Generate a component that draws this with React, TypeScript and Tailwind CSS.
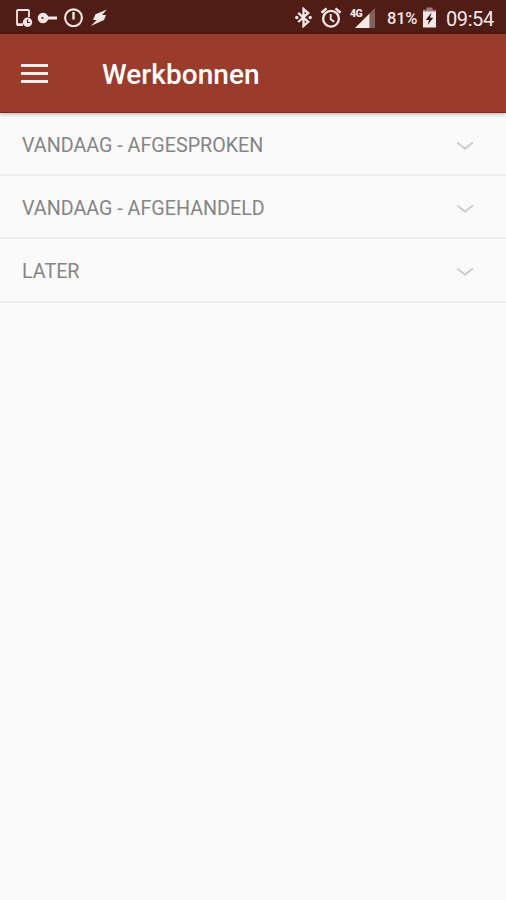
import { useState } from 'react'

interface Section {
  id: string
  title: string
}

const SECTIONS: Section[] = [
  { id: 'today-planned', title: 'VANDAAG - AFGESPROKEN' },
  { id: 'today-done', title: 'VANDAAG - AFGEHANDELD' },
  { id: 'later', title: 'LATER' },
]

export default function App() {
  return (
    <div className="flex h-screen w-full flex-col bg-[#fafafa] font-['Roboto',sans-serif]">
      <StatusBar />
      <AppBar title="Werkbonnen" />
      <main className="flex-1">
        {SECTIONS.map((s) => (
          <SectionRow key={s.id} section={s} />
        ))}
      </main>
    </div>
  )
}

function StatusBar() {
  return (
    <div className="flex h-[34px] shrink-0 items-center justify-between bg-[#4f1d15] pl-[15px] pr-[11px] text-[#f3e8e6]">
      <div className="flex items-center">
        <DeviceIcon />
        <KeyIcon />
        <TimerIcon />
        <BoltIcon />
      </div>
      <div className="flex items-center">
        <BluetoothIcon />
        <AlarmIcon />
        <SignalIcon />
        <span className="ml-[11px] w-[35px] whitespace-nowrap pt-[4px] text-[16.5px] font-medium leading-5 tracking-[-0.2px]">
          81%
        </span>
        <BatteryIcon />
        <span className="ml-[9px] w-[49px] whitespace-nowrap pt-[4px] text-[20px] leading-5 tracking-[-0.4px]">09:54</span>
      </div>
    </div>
  )
}

function AppBar({ title }: { title: string }) {
  return (
    <header className="z-10 flex h-[79px] shrink-0 items-center border-b border-[#8c2318] bg-[#9b3b2b] pl-[21px] shadow-[0_1px_4px_rgba(0,0,0,0.3)]">
      <button aria-label="Menu" className="flex w-[27px] flex-col gap-[5px]">
        <span className="h-[3px] bg-[#fbefec]" />
        <span className="h-[3px] bg-[#fbefec]" />
        <span className="h-[3px] bg-[#fbefec]" />
      </button>
      <h1 className="ml-[54px] pt-[4px] text-[28px] font-medium leading-8 tracking-[0.05px] text-white">{title}</h1>
    </header>
  )
}

function SectionRow({ section }: { section: Section }) {
  const [open, setOpen] = useState(false)

  return (
    <button
      onClick={() => setOpen(!open)}
      aria-expanded={open}
      className="flex h-[63.2px] w-full items-center justify-between border-b-2 border-[#eeeeee] pl-[22px] pr-[32px] pt-[5px] text-left"
    >
      <span className="text-[19.7px] leading-6 text-[#858585]">{section.title}</span>
      <svg width="18" height="10" viewBox="0 0 18 10" fill="none" className={open ? 'rotate-180' : ''}>
        <path d="M1.2 1.5 9 7.5l7.8-6" stroke="#cfcfcf" strokeWidth="2.2" />
      </svg>
    </button>
  )
}

function DeviceIcon() {
  return (
    <svg width="19" height="20" viewBox="0 0 19 20" fill="none">
      <path d="M7.5 18H3a1 1 0 0 1-1-1V4a1 1 0 0 1 1-1h10a1 1 0 0 1 1 1v6" stroke="currentColor" strokeWidth="1.8" />
      <path d="M2 16.3h6v2.5H2z" fill="currentColor" />
      <circle cx="12.5" cy="15.2" r="4.7" fill="currentColor" />
      <path d="M12.5 12.5v3h2.5" stroke="#4f1d15" strokeWidth="1.2" />
    </svg>
  )
}

function KeyIcon() {
  return (
    <svg width="21" height="20" viewBox="0 0 21 20" fill="none" className="ml-[3px]">
      <path d="M9 11h11" stroke="currentColor" strokeWidth="3" />
      <circle cx="6" cy="11" r="5.3" fill="currentColor" />
      <circle cx="5.5" cy="11" r="1.1" fill="#4f1d15" />
    </svg>
  )
}

function TimerIcon() {
  return (
    <svg width="20" height="20" viewBox="0 0 20 20" fill="none" className="ml-[5px]">
      <circle cx="10.5" cy="10.8" r="8.4" stroke="currentColor" strokeWidth="2.1" />
      <path d="M10.5 5v7.5" stroke="currentColor" strokeWidth="2.4" />
    </svg>
  )
}

function BoltIcon() {
  return (
    <svg width="19" height="20" viewBox="0 0 19 20" className="ml-[6px]">
      <path d="M18 2.5 6.5 7.2 4 13h3.8L1.8 19l13.2-6 2-5h-4Z" fill="currentColor" />
    </svg>
  )
}

function BluetoothIcon() {
  return (
    <svg width="19" height="22" viewBox="0 0 19 22" fill="none">
      <path d="m4.2 6.8 10 9-4.7 4.2V3l4.7 4-10 9" stroke="currentColor" strokeWidth="2.3" />
      <circle cx="2.8" cy="11.5" r="1.7" fill="currentColor" />
      <circle cx="16.2" cy="11.5" r="1.7" fill="currentColor" />
    </svg>
  )
}

function AlarmIcon() {
  return (
    <svg width="22" height="22" viewBox="0 0 22 22" fill="none" className="ml-[7px]">
      <circle cx="11" cy="12.7" r="7.9" stroke="currentColor" strokeWidth="2.3" />
      <path d="M1.5 6.7 6.5 2.4M20.5 6.7l-5-4.3" stroke="currentColor" strokeWidth="2.5" />
      <path d="M10.7 8v5.3l3.5 2.5" stroke="currentColor" strokeWidth="1.8" />
    </svg>
  )
}

function SignalIcon() {
  return (
    <div className="relative ml-[8px] h-[22px] w-[26px]">
      <svg width="26" height="22" viewBox="0 0 26 22">
        <path d="M19.5 7.5 25 2v20h-5.5Z" fill="#85615b" />
        <path d="M5 22 19.5 7.5V22Z" fill="currentColor" />
      </svg>
      <span className="absolute left-0 top-[2px] text-[10.5px] font-black leading-[12px] tracking-[-0.5px]">4G</span>
    </div>
  )
}

function BatteryIcon() {
  return (
    <svg width="15" height="22" viewBox="0 0 15 22">
      <path d="M4.5 1.5h6v2.3H14V6H1V3.8h3.5Z" fill="#9b7d78" />
      <path d="M1 5.5h13v16H1Z" fill="currentColor" />
      <path d="M9.5 6.5 3.8 14h3.3L5.5 19l5.8-7.3H8Z" fill="#35120d" />
    </svg>
  )
}
